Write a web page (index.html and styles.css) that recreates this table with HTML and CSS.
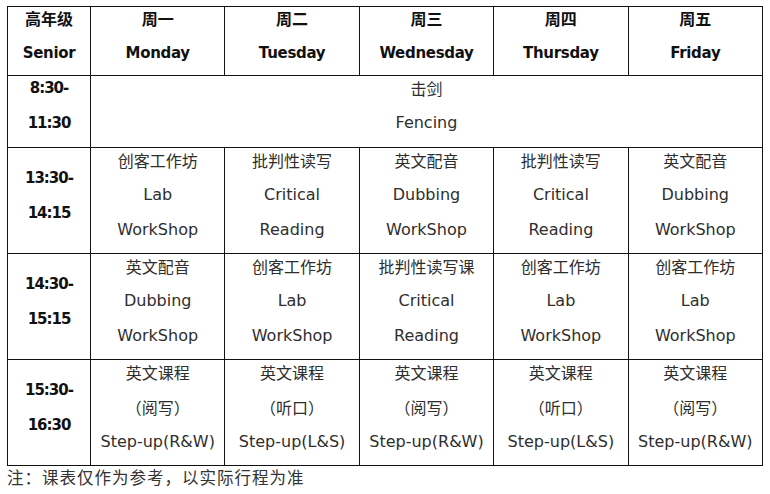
FILE: index.html
```html
<!DOCTYPE html>
<html lang="zh-CN">
<head>
<meta charset="utf-8">
<title>课表</title>
<link rel="stylesheet" href="styles.css">
</head>
<body>
<table class="sched">
  <colgroup>
    <col class="c-time"><col class="c-day"><col class="c-day"><col class="c-day"><col class="c-day"><col class="c-day">
  </colgroup>
  <tr class="hd">
    <td><div class="ln zh">高年级</div><div class="ln en">Senior</div></td>
    <td><div class="ln zh">周一</div><div class="ln en">Monday</div></td>
    <td><div class="ln zh">周二</div><div class="ln en">Tuesday</div></td>
    <td><div class="ln zh">周三</div><div class="ln en">Wednesday</div></td>
    <td><div class="ln zh">周四</div><div class="ln en">Thursday</div></td>
    <td><div class="ln zh">周五</div><div class="ln en">Friday</div></td>
  </tr>
  <tr class="r2">
    <td class="time"><div class="ln">8:30-</div><div class="ln">11:30</div></td>
    <td colspan="5"><div class="ln zh">击剑</div><div class="ln">Fencing</div></td>
  </tr>
  <tr class="rw">
    <td class="time"><div class="ln">13:30-</div><div class="ln">14:15</div></td>
    <td><div class="ln zh">创客工作坊</div><div class="ln">Lab</div><div class="ln">WorkShop</div></td>
    <td><div class="ln zh">批判性读写</div><div class="ln">Critical</div><div class="ln">Reading</div></td>
    <td><div class="ln zh">英文配音</div><div class="ln">Dubbing</div><div class="ln">WorkShop</div></td>
    <td><div class="ln zh">批判性读写</div><div class="ln">Critical</div><div class="ln">Reading</div></td>
    <td><div class="ln zh">英文配音</div><div class="ln">Dubbing</div><div class="ln">WorkShop</div></td>
  </tr>
  <tr class="rw">
    <td class="time"><div class="ln">14:30-</div><div class="ln">15:15</div></td>
    <td><div class="ln zh">英文配音</div><div class="ln">Dubbing</div><div class="ln">WorkShop</div></td>
    <td><div class="ln zh">创客工作坊</div><div class="ln">Lab</div><div class="ln">WorkShop</div></td>
    <td><div class="ln zh">批判性读写课</div><div class="ln">Critical</div><div class="ln">Reading</div></td>
    <td><div class="ln zh">创客工作坊</div><div class="ln">Lab</div><div class="ln">WorkShop</div></td>
    <td><div class="ln zh">创客工作坊</div><div class="ln">Lab</div><div class="ln">WorkShop</div></td>
  </tr>
  <tr class="rw">
    <td class="time"><div class="ln">15:30-</div><div class="ln">16:30</div></td>
    <td><div class="ln zh">英文课程</div><div class="ln zh">（阅写）</div><div class="ln">Step-up(R&amp;W)</div></td>
    <td><div class="ln zh">英文课程</div><div class="ln zh">（听口）</div><div class="ln">Step-up(L&amp;S)</div></td>
    <td><div class="ln zh">英文课程</div><div class="ln zh">（阅写）</div><div class="ln">Step-up(R&amp;W)</div></td>
    <td><div class="ln zh">英文课程</div><div class="ln zh">（听口）</div><div class="ln">Step-up(L&amp;S)</div></td>
    <td><div class="ln zh">英文课程</div><div class="ln zh">（阅写）</div><div class="ln">Step-up(R&amp;W)</div></td>
  </tr>
</table>
<p class="note">注：课表仅作为参考，以实际行程为准</p>
</body>
</html>
```

FILE: styles.css
```css
html, body {
  margin: 0;
  padding: 0;
  background: #fff;
}
body {
  padding: 6px 0 0 7px;
  font-family: "DejaVu Sans", "Noto Sans CJK SC", sans-serif;
  color: #2e2e2e;
}
.sched {
  border-collapse: collapse;
  table-layout: fixed;
  width: 755px;
}
.c-time { width: 83px; }
.c-day { width: 134.4px; }
.sched td {
  border: 1px solid #111;
  padding: 0;
  text-align: center;
  vertical-align: top;
  font-size: 16px;
}
.ln {
  height: 35px;
  line-height: 24px;
  white-space: nowrap;
}
.zh {
  font-family: "Noto Sans CJK SC", "DejaVu Sans", sans-serif;
}
.hd td { color: #111; }
.hd .ln { height: 34px; line-height: 22px; }
.hd .zh { font-size: 16px; font-weight: bold; }
.hd .en { font-size: 15px; font-weight: bold; letter-spacing: -0.3px; line-height: 25px; }
.r2 td { padding-bottom: 1px; }
.sched td.time {
  vertical-align: middle;
  font-weight: bold;
  font-size: 15px;
  letter-spacing: -1px;
  color: #111;
}
.sched .r2 td.time { vertical-align: top; }
.note {
  margin: 0;
  font-family: "Noto Sans CJK SC", sans-serif;
  font-size: 16.5px;
  line-height: 22px;
  color: #333;
  letter-spacing: 1px;
}
```
